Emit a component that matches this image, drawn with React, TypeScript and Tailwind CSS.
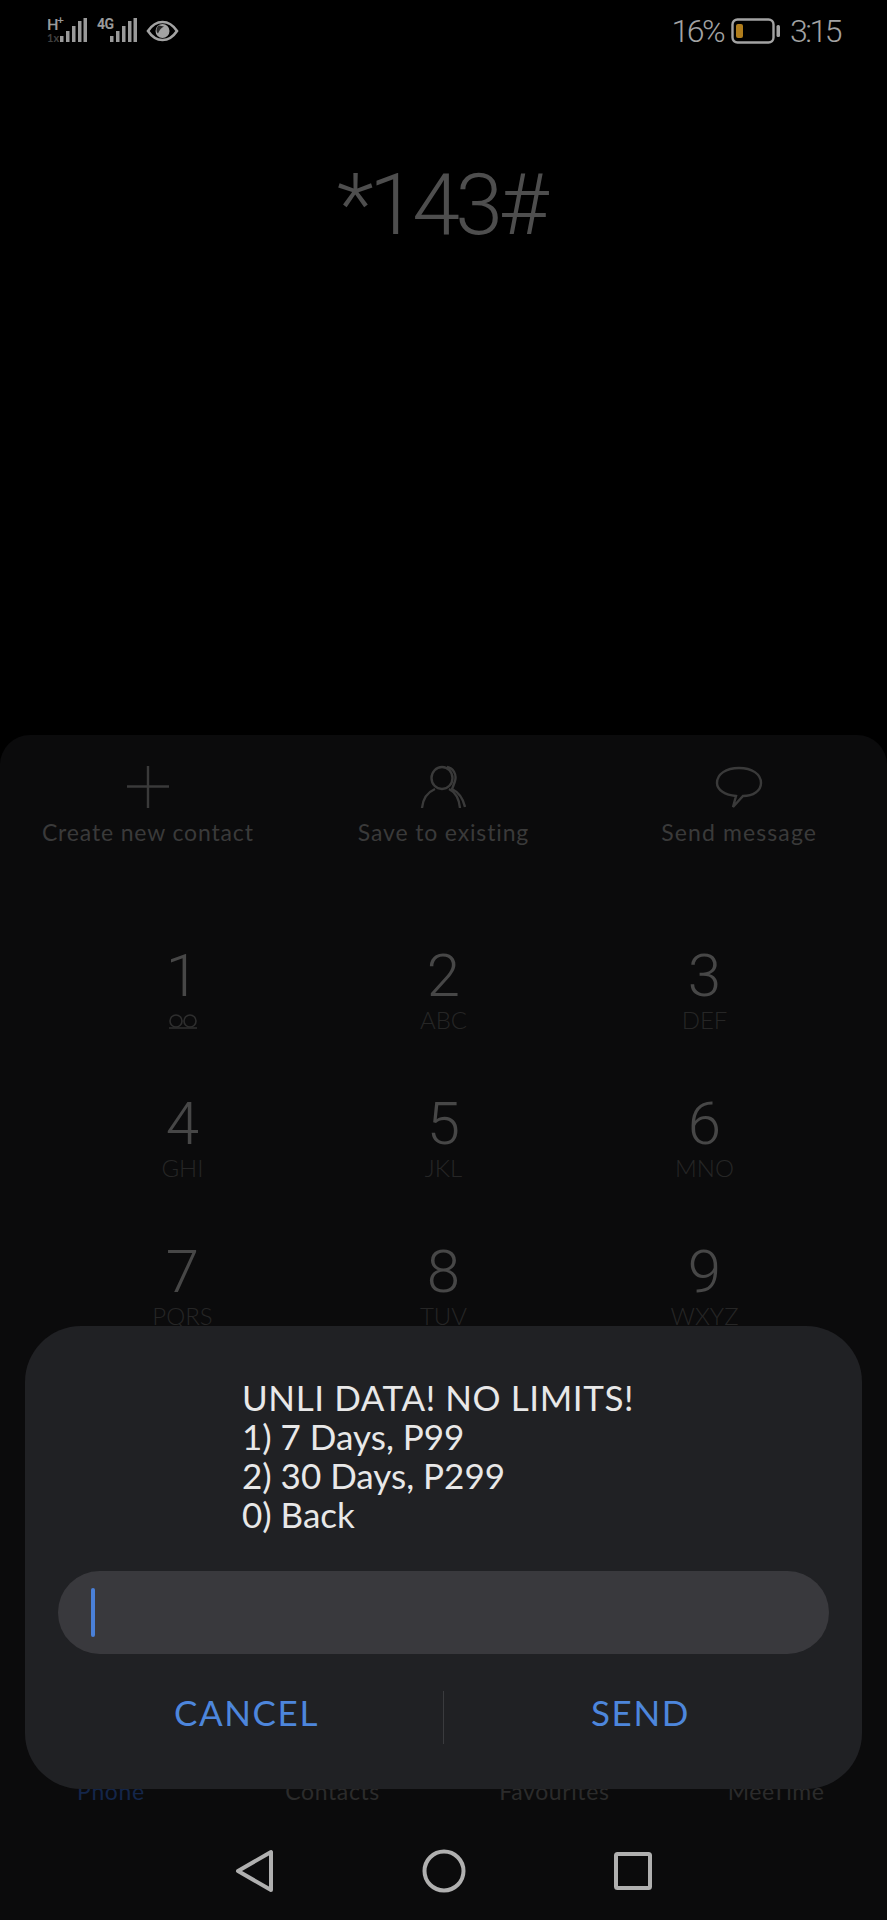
import React from "react";

const keys = [
  { d: "1", l: "" },
  { d: "2", l: "ABC" },
  { d: "3", l: "DEF" },
  { d: "4", l: "GHI" },
  { d: "5", l: "JKL" },
  { d: "6", l: "MNO" },
  { d: "7", l: "PQRS" },
  { d: "8", l: "TUV" },
  { d: "9", l: "WXYZ" },
];

const Signal = () => (
  <svg width="27" height="25" viewBox="0 0 27 25" fill="#9a9a9a">
    <rect x="0" y="18" width="3.5" height="6" />
    <rect x="6" y="13" width="3.5" height="11" />
    <rect x="12" y="8" width="3.5" height="16" />
    <rect x="18" y="3" width="3.5" height="21" />
    <rect x="23.5" y="0" width="3.5" height="24" />
  </svg>
);

const StatusBar = () => (
  <div className="flex h-[60px] items-center justify-between pl-[47px] pr-[47px] pt-[1px] text-[#a3a3a3]">
    <div className="flex items-center">
      <div className="relative h-[25px] w-[50px]">
        <span className="absolute left-0 top-[-3px] text-[15px] font-bold leading-[18px] text-[#9a9a9a]">H</span>
        <span className="absolute left-[10px] top-[-5px] text-[12px] font-bold leading-[14px] text-[#9a9a9a]">+</span>
        <span className="absolute left-0 top-[13px] text-[11px] font-bold leading-[13px] text-[#404040]">1x</span>
        <div className="absolute left-[13px] top-0">
          <Signal />
        </div>
      </div>
      <div className="relative h-[25px] w-[40px]">
        <span className="absolute left-0 top-[-3px] font-['Roboto',sans-serif] text-[14px] font-bold leading-[18px] tracking-[-0.5px] text-[#9a9a9a]">4G</span>
        <div className="absolute left-[13px] top-0">
          <Signal />
        </div>
      </div>
      <svg width="33" height="22" viewBox="0 0 33 22" className="ml-[9px]">
        <path d="M2 11C6 5 11 2 16.5 2S27 5 31 11C27 17 22 20 16.5 20S6 17 2 11Z" fill="none" stroke="#a3a3a3" strokeWidth="2.6" />
        <circle cx="16.5" cy="11" r="7" fill="#a3a3a3" />
        <path d="M13 5.5C10 7 10 12 12 13.5C13.5 10 15 8 18 6.5Z" fill="#2a2a2a" />
      </svg>
    </div>
    <div className="flex items-center font-['Roboto',sans-serif] text-[32px] font-light leading-[36px]">
      <span className="tracking-[-2.5px]">16%</span>
      <svg width="49" height="26" viewBox="0 0 49 26" className="ml-[8px]">
        <rect x="1.5" y="1.5" width="41" height="23" rx="5" fill="none" stroke="#a3a3a3" strokeWidth="2.4" />
        <rect x="5" y="6" width="7" height="14" rx="2" fill="#b07d1c" />
        <rect x="45.5" y="7" width="3.5" height="12" rx="1.5" fill="#a3a3a3" />
      </svg>
      <span className="ml-[10px] tracking-[-2.5px]">3:15</span>
    </div>
  </div>
);

const ActionRow = () => (
  <div className="grid grid-cols-3 pt-[30px] text-center text-[23px] font-normal leading-[28px] text-[#3a3a3a]">
    <div className="flex flex-col items-center">
      <svg width="46" height="44" viewBox="0 0 46 44" fill="none" stroke="#3a3a3a" strokeWidth="2.4">
        <path d="M23 1V43M2 21.5H44" />
      </svg>
      <span className="mt-[9px] tracking-[0.85px]">Create new contact</span>
    </div>
    <div className="flex flex-col items-center">
      <svg width="46" height="44" viewBox="0 0 46 44" fill="none" stroke="#3a3a3a" strokeWidth="2.4">
        <ellipse cx="22" cy="13" rx="10.5" ry="11" />
        <path d="M2 43C3 33 8 27 15 24M29 24C35 27 39 33 40 43" />
        <path d="M27 2C33 3 37 9 35 16C34 19 33 22 32 24C38 27 43 33 45 42" />
      </svg>
      <span className="mt-[9px] tracking-[0.85px]">Save to existing</span>
    </div>
    <div className="flex flex-col items-center">
      <svg width="48" height="44" viewBox="0 0 48 44" fill="none" stroke="#3a3a3a" strokeWidth="2.4">
        <path d="M24 3C37 3 46 9 46 18C46 26 38 31 28 31L18 42L21 31C10 30 2 25 2 18C2 9 11 3 24 3Z" />
      </svg>
      <span className="mt-[9px] tracking-[1.1px]">Send message</span>
    </div>
  </div>
);

const Keypad = () => (
  <div className="mx-auto mt-[108px] grid w-[783px] grid-cols-3 gap-y-[78px]">
    {keys.map((k) => (
      <div key={k.d} className="flex h-[70px] flex-col items-center">
        <span className="font-['Roboto',sans-serif] text-[60px] font-light leading-[44px] text-[#474747]">{k.d}</span>
        {k.l ? (
          <span className="mt-[12px] text-[24px] font-light leading-[20px] text-[#262626]">{k.l}</span>
        ) : (
          <svg width="30" height="15" viewBox="0 0 30 15" fill="none" stroke="#2e2e2e" strokeWidth="1.6" className="mt-[16px] shrink-0">
            <circle cx="8" cy="7" r="6" />
            <circle cx="22" cy="7" r="6" />
            <path d="M1 14H29" />
          </svg>
        )}
      </div>
    ))}
  </div>
);

const Dialog = () => (
  <div className="absolute left-[25px] top-[1326px] h-[463px] w-[837px] rounded-[56px] bg-[#202124] px-[33px] pt-[52px]">
    <div className="pl-[184px] text-[35px] font-normal leading-[39px] text-[#e8e8e8]">
      <p className="tracking-[0.6px]">UNLI DATA! NO LIMITS!</p>
      <p>1) 7 Days, P99</p>
      <p>2) 30 Days, P299</p>
      <p>0) Back</p>
    </div>
    <div className="mt-[37px] flex h-[83px] items-center rounded-full bg-[#39393d] pl-[33px]">
      <div className="h-[49px] w-[4px] rounded-full bg-[#4a80d8]" />
    </div>
    <div className="mt-[37px] flex h-[53px] items-center text-[35px] font-normal leading-[40px] tracking-[1.6px] text-[#4d86dc]">
      <div className="flex-1 pb-[12px] pr-[8px] text-center">CANCEL</div>
      <div className="h-full w-[1px] bg-[#3a3b3e]" />
      <div className="flex-1 pb-[12px] pl-[8px] text-center">SEND</div>
    </div>
  </div>
);

const App: React.FC = () => {
  return (
    <div className="relative flex h-[1920px] w-[887px] flex-col overflow-hidden bg-black font-['Lato',sans-serif]">
      <StatusBar />

      {/* numero marcado */}
      <div className="mt-[90px] pr-[6px] text-center font-['Roboto',sans-serif] text-[86px] font-light leading-[110px] tracking-[-4.5px] text-[#4e4e4e]">
        *143#
      </div>

      {/* panel del teclado */}
      <div className="mt-[475px] flex flex-1 flex-col rounded-t-[30px] bg-[#0b0b0c]">
        <ActionRow />
        <Keypad />
        <div className="mt-auto">
          <div className="grid grid-cols-4 text-center text-[23px] font-normal leading-[26px] tracking-[0.6px] text-[#2b2b2b]">
            <span className="text-[#14264a]">Phone</span>
            <span>Contacts</span>
            <span>Favourites</span>
            <span>MeeTime</span>
          </div>
          <div className="flex h-[116px] items-center justify-center gap-[147px] pt-[17px]">
            <svg width="40" height="46" viewBox="0 0 40 46" fill="none" stroke="#b0b0b0" strokeWidth="4" strokeLinejoin="round">
              <path d="M36 4V42L3 23Z" />
            </svg>
            <svg width="44" height="44" viewBox="0 0 44 44" fill="none" stroke="#b0b0b0" strokeWidth="4">
              <circle cx="22" cy="22" r="19.5" />
            </svg>
            <svg width="40" height="40" viewBox="0 0 40 40" fill="none" stroke="#b0b0b0" strokeWidth="4" strokeLinejoin="round">
              <rect x="3" y="3" width="34" height="34" rx="1.5" />
            </svg>
          </div>
        </div>
      </div>

      <Dialog />
    </div>
  );
};

export default App;
